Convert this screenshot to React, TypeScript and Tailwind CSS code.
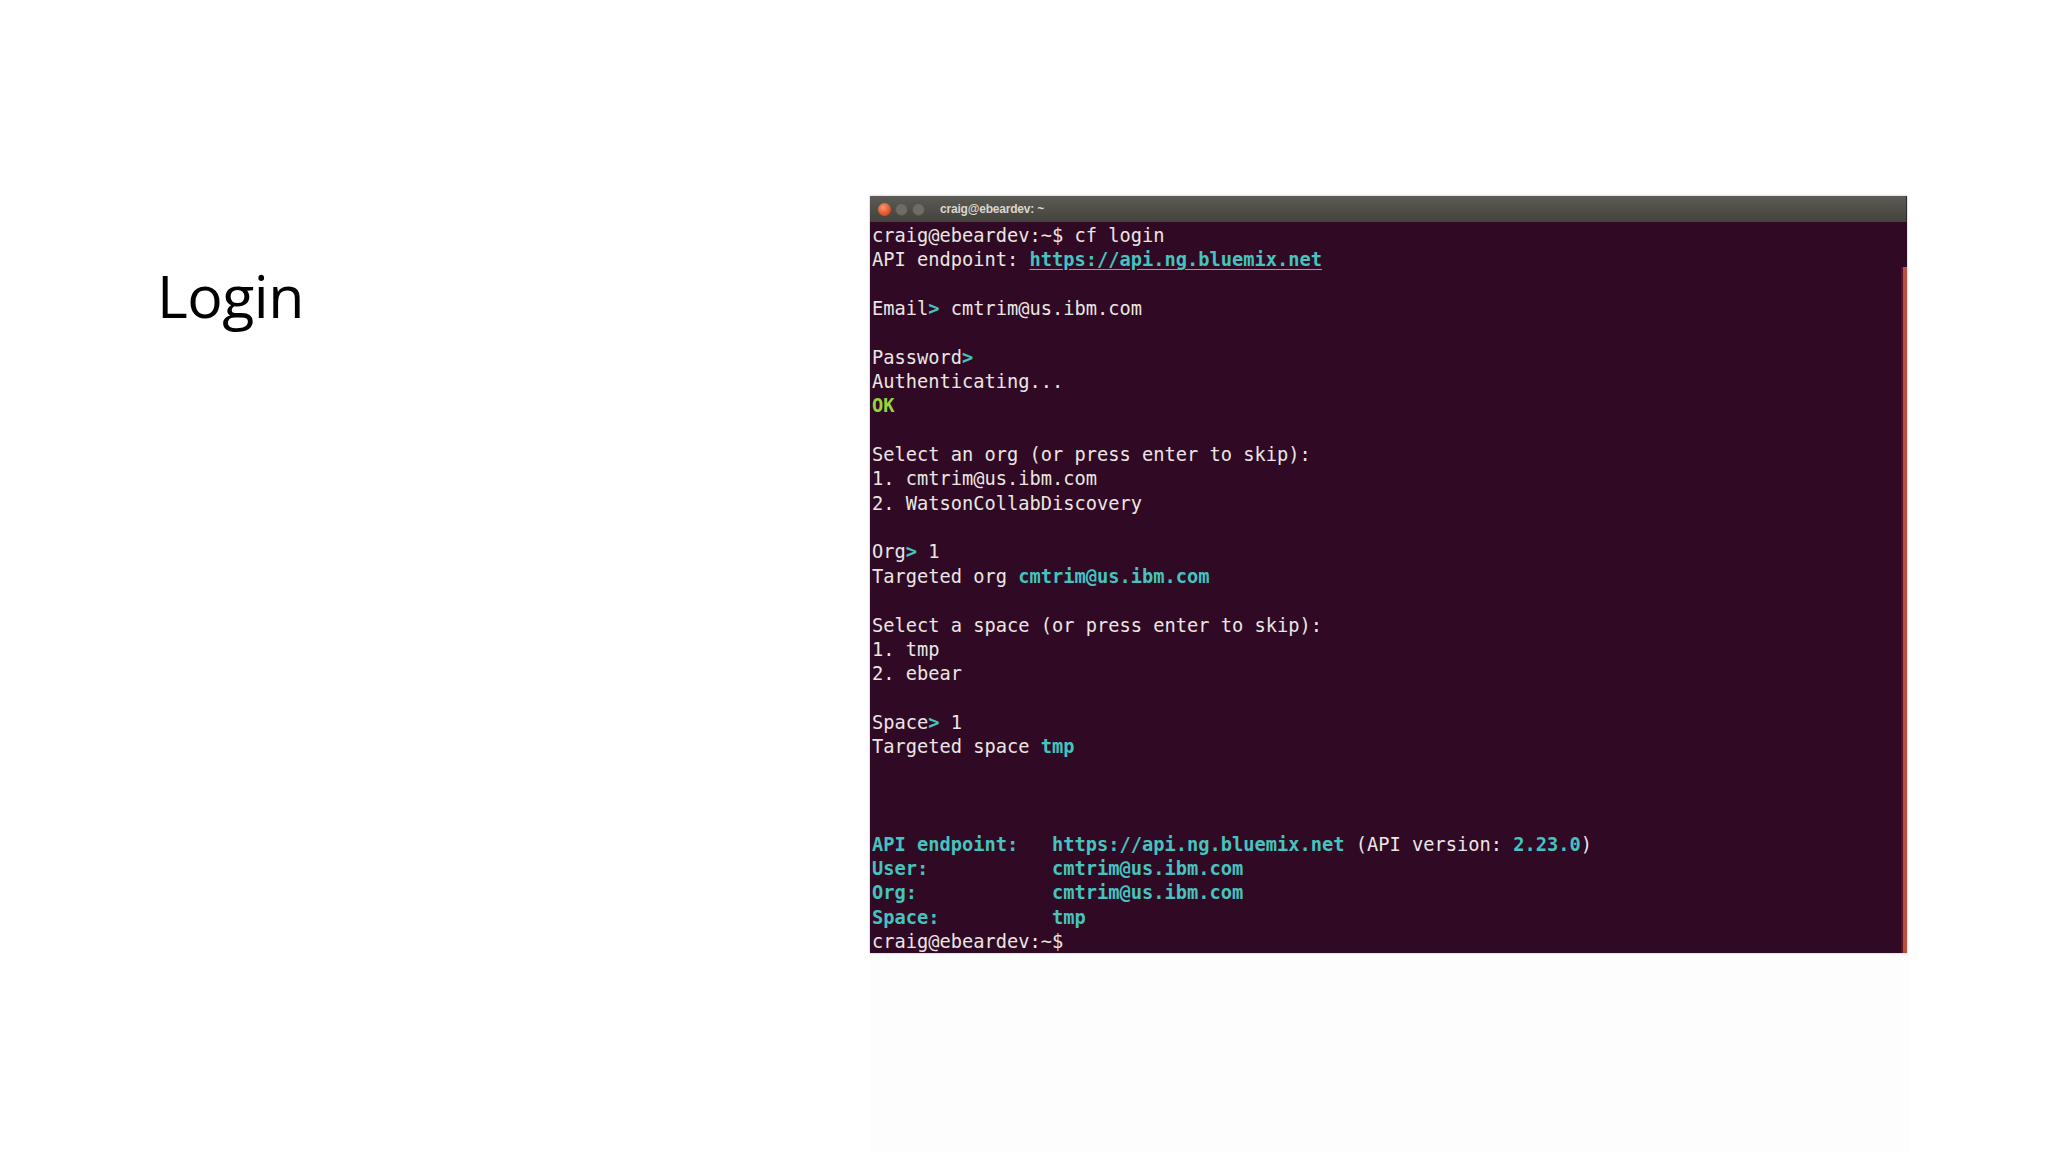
import React from "react";

type Seg = { t: string; c?: "teal" | "green" | "link" };

const lines: Seg[][] = [
  [{ t: "craig@ebeardev:~$ cf login" }],
  [{ t: "API endpoint: " }, { t: "https://api.ng.bluemix.net", c: "link" }],
  [],
  [{ t: "Email" }, { t: ">", c: "teal" }, { t: " cmtrim@us.ibm.com" }],
  [],
  [{ t: "Password" }, { t: ">", c: "teal" }],
  [{ t: "Authenticating..." }],
  [{ t: "OK", c: "green" }],
  [],
  [{ t: "Select an org (or press enter to skip):" }],
  [{ t: "1. cmtrim@us.ibm.com" }],
  [{ t: "2. WatsonCollabDiscovery" }],
  [],
  [{ t: "Org" }, { t: ">", c: "teal" }, { t: " 1" }],
  [{ t: "Targeted org " }, { t: "cmtrim@us.ibm.com", c: "teal" }],
  [],
  [{ t: "Select a space (or press enter to skip):" }],
  [{ t: "1. tmp" }],
  [{ t: "2. ebear" }],
  [],
  [{ t: "Space" }, { t: ">", c: "teal" }, { t: " 1" }],
  [{ t: "Targeted space " }, { t: "tmp", c: "teal" }],
  [],
  [],
  [],
  [
    { t: "API endpoint:   ", c: "teal" },
    { t: "https://api.ng.bluemix.net", c: "teal" },
    { t: " (API version: " },
    { t: "2.23.0", c: "teal" },
    { t: ")" },
  ],
  [{ t: "User:           ", c: "teal" }, { t: "cmtrim@us.ibm.com", c: "teal" }],
  [{ t: "Org:            ", c: "teal" }, { t: "cmtrim@us.ibm.com", c: "teal" }],
  [{ t: "Space:          ", c: "teal" }, { t: "tmp", c: "teal" }],
  [{ t: "craig@ebeardev:~$" }],
];

function segClass(c?: Seg["c"]) {
  if (c === "teal") return "text-[#45c4bf] font-bold";
  if (c === "green") return "text-[#96d63a] font-bold";
  if (c === "link") return "text-[#45c4bf] font-bold underline underline-offset-[3px]";
  return "";
}

function Terminal() {
  return (
    <div className="relative w-[1037px] h-[757px] flex flex-col bg-[#300a24] shadow-[0_0_2px_rgba(0,0,0,0.3)]">
      {/* title bar */}
      <div className="h-[26px] flex items-center pl-[8px] bg-gradient-to-b from-[#5c5b55] to-[#43423d] border-r border-[#2a2a28]">
        <div className="flex items-center gap-[4px]">
          <span className="w-[13px] h-[13px] rounded-full bg-[radial-gradient(circle_at_40%_35%,#f79a6e,#e2522a_60%,#b8401f)]" />
          <span className="w-[13px] h-[13px] rounded-full bg-[#6d6c66] border border-[#55544f]" />
          <span className="w-[13px] h-[13px] rounded-full bg-[#6d6c66] border border-[#55544f]" />
        </div>
        <span className="ml-[15px] text-[12px] font-bold text-[#d9d6cd] tracking-[-0.2px] font-['Liberation_Sans',Arial,sans-serif]">
          craig@ebeardev: ~
        </span>
      </div>
      {/* body */}
      <div className="flex-1 pl-[2px] pt-[2px] overflow-hidden font-['DejaVu_Sans_Mono',monospace] text-[18.7px] leading-[24.35px] text-[#ebe6e3] whitespace-pre">
        {lines.map((l, i) => (
          <div key={i} className="h-[24.35px]">
            {l.map((s, j) => (
              <span key={j} className={segClass(s.c)}>
                {s.t}
              </span>
            ))}
          </div>
        ))}
      </div>
      {/* red edge of window behind */}
      <div className="absolute right-0 top-[71px] bottom-0 w-[6px] flex">
        <div className="w-[2px] bg-[#5a1220]" />
        <div className="flex-1 bg-[#b9503f]" />
      </div>
    </div>
  );
}

export default function App() {
  return (
    <div className="w-[2048px] h-[1152px] bg-white flex overflow-hidden">
      <div className="w-[870px] shrink-0 pl-[157px] pt-[266px]">
        <h1 className="font-['Open_Sans',sans-serif] font-normal text-[59px] leading-none text-black tracking-[-0.5px]">
          Login
        </h1>
      </div>
      <div className="flex flex-col">
        <div className="h-[196px]" />
        <Terminal />
        <div className="flex-1 w-[1040px] bg-[#fdfdfd]" />
      </div>
    </div>
  );
}
